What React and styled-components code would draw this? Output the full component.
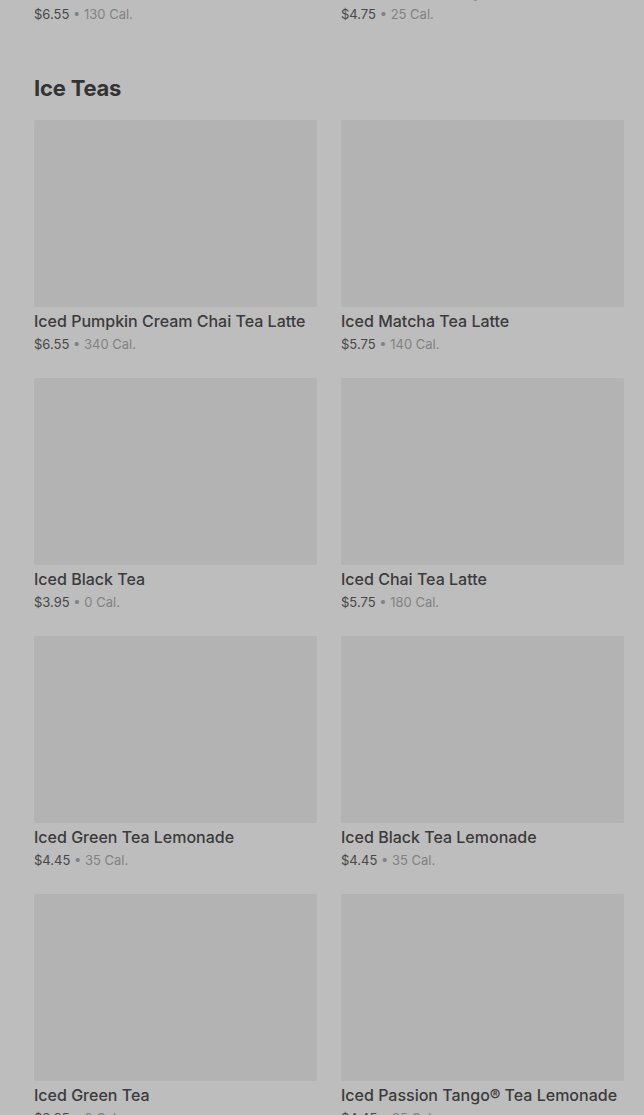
import styled, { createGlobalStyle } from "styled-components"

const GlobalStyle = createGlobalStyle`
  html, body {
    margin: 0;
    padding: 0;
    background: #bdbdbd;
    font-family: Inter, "Noto Sans", "Liberation Sans", sans-serif;
    overflow: hidden;
  }
`

const previous = [
  { name: "Iced Peppermint Mocha", price: "$6.55", cal: "130 Cal." },
  { name: "Iced Passion Tango Tea", price: "$4.75", cal: "25 Cal." },
]

const teas = [
  { name: "Iced Pumpkin Cream Chai Tea Latte", price: "$6.55", cal: "340 Cal." },
  { name: "Iced Matcha Tea Latte", price: "$5.75", cal: "140 Cal." },
  { name: "Iced Black Tea", price: "$3.95", cal: "0 Cal." },
  { name: "Iced Chai Tea Latte", price: "$5.75", cal: "180 Cal." },
  { name: "Iced Green Tea Lemonade", price: "$4.45", cal: "35 Cal." },
  { name: "Iced Black Tea Lemonade", price: "$4.45", cal: "35 Cal." },
  { name: "Iced Green Tea", price: "$3.95", cal: "0 Cal." },
  { name: "Iced Passion Tango\u00ae Tea Lemonade", price: "$4.45", cal: "35 Cal." },
]

function Item({ item, noImage }) {
  return (
    <Card>
      {!noImage && <Thumb />}
      <Name>{item.name}</Name>
      <Meta>
        <Price>{item.price}</Price>
        <Cal>{" \u2022 "}{item.cal}</Cal>
      </Meta>
    </Card>
  )
}

export default function App() {
  return (
    <>
      <GlobalStyle />
      <Page>
        <Grid>
          {previous.map((item) => (
            <Item key={item.name} item={item} noImage />
          ))}
        </Grid>
        <Section>
          <Heading>Ice Teas</Heading>
          <Grid>
            {teas.map((item) => (
              <Item key={item.name} item={item} />
            ))}
          </Grid>
        </Section>
      </Page>
    </>
  )
}

const Page = styled.div`
  margin-top: -20px;
  padding: 0 20px 0 34px;
`

const Section = styled.section`
  margin-top: 50px;
`

const Heading = styled.h2`
  margin: 0 0 18px;
  font-size: 22px;
  line-height: 28px;
  font-weight: 700;
  color: #333;
  letter-spacing: -0.2px;
`

const Grid = styled.div`
  display: grid;
  grid-template-columns: 283px 283px;
  column-gap: 24px;
  row-gap: 24px;
`

const Card = styled.div`
  display: flex;
  flex-direction: column;
`

const Thumb = styled.div`
  height: 187px;
  background: #b3b3b3;
  border-radius: 2px;
  margin-bottom: 3px;
`

const Name = styled.div`
  font-size: 16px;
  line-height: 22px;
  font-weight: 500;
  color: #3b3b3b;
  white-space: nowrap;
`

const Meta = styled.div`
  margin-top: 2px;
  font-size: 13px;
  line-height: 20px;
`

const Price = styled.span`
  color: #474747;
`

const Cal = styled.span`
  color: #828282;
`
